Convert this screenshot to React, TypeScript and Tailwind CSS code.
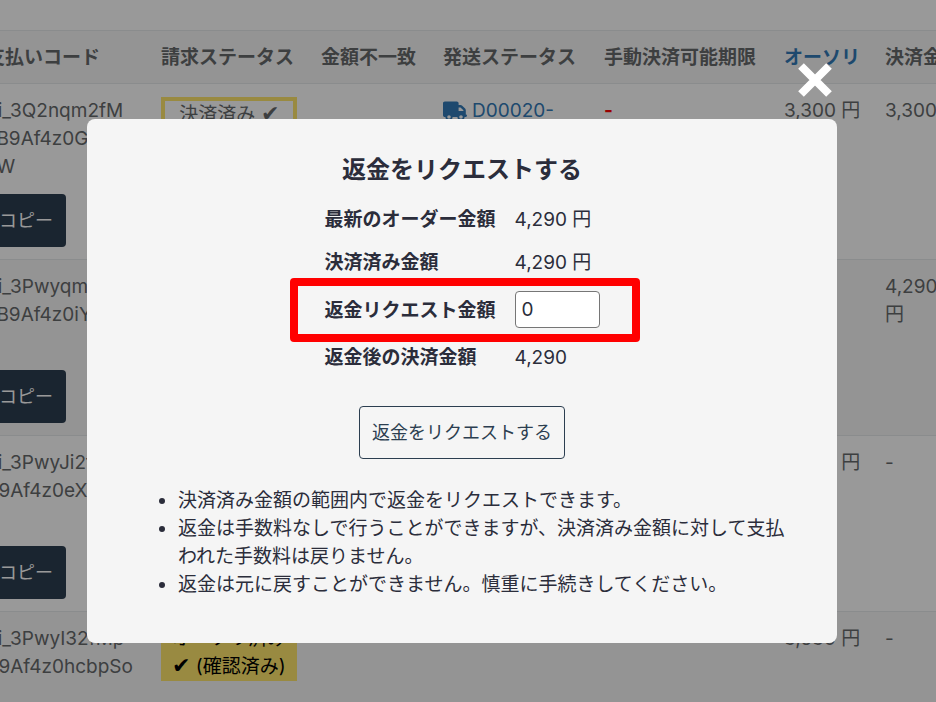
import { useState } from "react";
import type { ReactNode } from "react";
import { FaTruck } from "react-icons/fa6";

type Row = {
  code: string[];
  status?: ReactNode;
  shipping?: string;
  limit?: string;
  authorized: string;
  captured: ReactNode;
};

function Check() {
  return <span className="text-[22px] leading-none">✔</span>;
}

function Paid() {
  return (
    <div className="h-9 border-4 border-[#ffe66d] text-center">
      決済済み <Check />
    </div>
  );
}

function Authorized() {
  return (
    <div className="h-14 bg-[#ffe66d] text-center text-black">
      オーソリ済み
      <br />
      <Check /> (確認済み)
    </div>
  );
}

const rows: Row[] = [
  {
    code: ["pi_3Q2nqm2fM", "kB9Af4z0GhR", "kW"],
    status: <Paid />,
    shipping: "D00020-",
    limit: "-",
    authorized: "3,300 円",
    captured: <span className="whitespace-nowrap">3,300 円</span>,
  },
  {
    code: ["pi_3Pwyqm2fM", "kB9Af4z0iYc"],
    authorized: "-",
    captured: "4,290 円",
  },
  {
    code: ["pi_3PwyJi2fM", "B9Af4z0eXk"],
    authorized: "3,630 円",
    captured: "-",
  },
  {
    code: ["pi_3PwyI32fMp", "B9Af4z0hcbpSo"],
    status: <Authorized />,
    authorized: "3,630 円",
    captured: "-",
  },
];

const cell = "px-3 pt-[13px] pb-3 align-top";
const head = "px-3 pt-[13px] pb-[11px] text-left font-bold whitespace-nowrap";

function PaymentsTable() {
  return (
    <table className="-ml-[26px] w-[991px] table-fixed border-collapse">
      <colgroup>
        <col className="w-[175px]" />
        <col className="w-[160px]" />
        <col className="w-[122px]" />
        <col className="w-[161px]" />
        <col className="w-[180px]" />
        <col className="w-[101px]" />
        <col className="w-[92px]" />
      </colgroup>
      <thead>
        <tr className="border-y border-[#e7eaec] bg-[#f7f7f7]">
          <th className={head}>支払いコード</th>
          <th className={head}>請求ステータス</th>
          <th className={head}>金額不一致</th>
          <th className={head}>発送ステータス</th>
          <th className={head}>手動決済可能期限</th>
          <th className={head}>
            <a href="#authorized" className="text-[#337ab7]">
              オーソリ
            </a>
          </th>
          <th className={head}>決済金額</th>
        </tr>
      </thead>
      <tbody>
        {rows.map((row) => (
          <tr key={row.code[0]} className="border-b border-[#e7eaec] even:bg-[#f7f7f7]">
            <td className={cell}>
              <div className="mb-[13px] h-[84px]">
                {row.code.map((line) => (
                  <div key={line}>{line}</div>
                ))}
              </div>
              <button
                type="button"
                className="block h-[53px] rounded bg-[#2c3e50] px-[13px] text-lg text-white"
              >
                コピー
              </button>
            </td>
            <td className={cell}>{row.status}</td>
            <td className={cell} />
            <td className={cell}>
              {row.shipping && (
                <a href="#shipping" className="flex items-center gap-[5px] text-[#337ab7]">
                  <FaTruck className="h-5 w-6" />
                  {row.shipping}
                </a>
              )}
            </td>
            <td className={`${cell} font-bold text-[#ff0000]`}>{row.limit}</td>
            <td className={`${cell} whitespace-nowrap`}>{row.authorized}</td>
            <td className={cell}>{row.captured}</td>
          </tr>
        ))}
      </tbody>
    </table>
  );
}

function RefundDialog() {
  const [amount, setAmount] = useState("0");
  const label = "w-[190px] py-2 text-left font-bold whitespace-nowrap";
  return (
    <div
      role="dialog"
      aria-modal="true"
      aria-labelledby="refund-title"
      className="relative w-full max-w-[750px] rounded-lg bg-[#f5f5f5] px-7 pt-[33px] pb-11 text-[#2b2d3b]"
    >
      <button type="button" aria-label="閉じる" className="absolute right-[5px] -top-[56px]">
        <svg viewBox="0 0 34 34" className="block size-[34px]" stroke="#fff" strokeWidth="8">
          <path d="M3 3 L31 31 M31 3 L3 31" />
        </svg>
      </button>
      <h2 id="refund-title" className="mb-[10px] text-center text-2xl leading-9 font-bold">
        返金をリクエストする
      </h2>
      <table className="mx-auto leading-[27px]">
        <tbody>
          <tr>
            <th className={label}>最新のオーダー金額</th>
            <td>4,290 円</td>
          </tr>
          <tr>
            <th className={label}>決済済み金額</th>
            <td>4,290 円</td>
          </tr>
          <tr>
            <th className={`${label} relative`}>
              <label htmlFor="refund-amount">返金リクエスト金額</label>
              <span className="pointer-events-none absolute -inset-y-[6px] -left-[35px] w-[350px] rounded border-8 border-[#ff0000]" />
            </th>
            <td className="pt-[7px] pb-2">
              <input
                id="refund-amount"
                type="text"
                value={amount}
                onChange={(e) => setAmount(e.target.value)}
                className="block h-[37px] w-[85px] rounded border border-[#767676] bg-white px-[6px]"
              />
            </td>
          </tr>
          <tr>
            <th className={label}>返金後の決済金額</th>
            <td>4,290</td>
          </tr>
        </tbody>
      </table>
      <button
        type="button"
        className="mx-auto mt-[27px] block h-[53px] rounded border border-[#2c3e50] px-3 text-lg text-[#2c3e50]"
      >
        返金をリクエストする
      </button>
      <ul className="mt-7 list-disc pr-3 pl-[63px]">
        <li>決済済み金額の範囲内で返金をリクエストできます。</li>
        <li>
          返金は手数料なしで行うことができますが、決済済み金額に対して支払われた手数料は戻りません。
        </li>
        <li>返金は元に戻すことができません。慎重に手続きしてください。</li>
      </ul>
    </div>
  );
}

export default function App() {
  return (
    <div className="relative h-screen overflow-hidden bg-white pt-[30px] font-['Inter','Noto_Sans_CJK_JP',sans-serif] text-[19px] leading-7 text-[#676a6c]">
      <PaymentsTable />
      <div className="absolute inset-0 flex items-start justify-center bg-black/40 pt-[119px] pr-3">
        <RefundDialog />
      </div>
    </div>
  );
}
